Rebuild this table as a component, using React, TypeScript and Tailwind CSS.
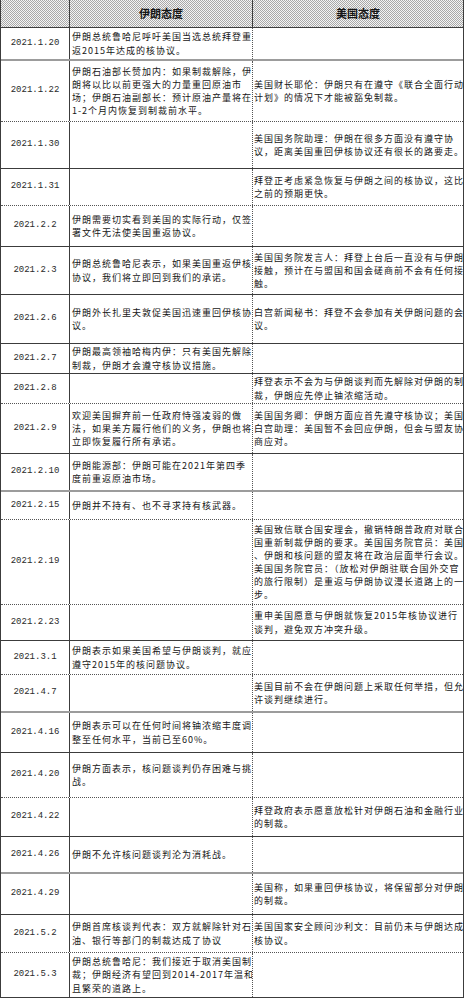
type Row = {
  date: string;
  iran: string[];
  us: string[];
  h: string;
  b: string;
};

// row dividers as they appear in the sheet
const SOLID = "border-b border-[#3c3c3c]";
const DOT = "border-b border-dotted border-[#555555]";
const THICK = "border-b-2 border-[#9c9c9c]";

const rows: Row[] = [
  {
    date: "2021.1.20",
    iran: ["伊朗总统鲁哈尼呼吁美国当选总统拜登重", "返2015年达成的核协议。"],
    us: [],
    h: "h-[33px]",
    b: THICK,
  },
  {
    date: "2021.1.22",
    iran: [
      "伊朗石油部长赞加内：如果制裁解除，伊",
      "朗将以比以前更强大的力量重回原油市",
      "场；伊朗石油副部长：预计原油产量将在",
      "1-2个月内恢复到制裁前水平。",
    ],
    us: ["美国财长耶伦：伊朗只有在遵守《联合全面行动", "计划》的情况下才能被豁免制裁。"],
    h: "h-[61px]",
    b: DOT,
  },
  {
    date: "2021.1.30",
    iran: [],
    us: ["美国国务院助理：伊朗在很多方面没有遵守协", "议，距离美国重回伊核协议还有很长的路要走。"],
    h: "h-[47px]",
    b: SOLID,
  },
  {
    date: "2021.1.31",
    iran: [],
    us: ["拜登正考虑紧急恢复与伊朗之间的核协议，这比", "之前的预期更快。"],
    h: "h-[37px]",
    b: DOT,
  },
  {
    date: "2021.2.2",
    iran: ["伊朗需要切实看到美国的实际行动，仅签", "署文件无法使美国重返协议。"],
    us: [],
    h: "h-[41px]",
    b: SOLID,
  },
  {
    date: "2021.2.3",
    iran: ["伊朗总统鲁哈尼表示，如果美国重返伊核", "协议，我们将立即回到我们的承诺。"],
    us: [
      "美国国务院发言人：拜登上台后一直没有与伊朗",
      "接触，预计在与盟国和国会磋商前不会有任何接",
      "触。",
    ],
    h: "h-[48px]",
    b: SOLID,
  },
  {
    date: "2021.2.6",
    iran: ["伊朗外长扎里夫敦促美国迅速重回伊核协", "议。"],
    us: ["白宫新闻秘书：拜登不会参加有关伊朗问题的会", "议。"],
    h: "h-[49px]",
    b: SOLID,
  },
  {
    date: "2021.2.7",
    iran: ["伊朗最高领袖哈梅内伊：只有美国先解除", "制裁，伊朗才会遵守核协议措施。"],
    us: [],
    h: "h-[30px]",
    b: SOLID,
  },
  {
    date: "2021.2.8",
    iran: [],
    us: ["拜登表示不会为与伊朗谈判而先解除对伊朗的制", "裁，伊朗应先停止铀浓缩活动。"],
    h: "h-[30px]",
    b: DOT,
  },
  {
    date: "2021.2.9",
    iran: [
      "欢迎美国摒弃前一任政府恃强凌弱的做",
      "法，如果美方履行他们的义务，伊朗也将",
      "立即恢复履行所有承诺。",
    ],
    us: [
      "美国国务卿：伊朗方面应首先遵守核协议；美国",
      "白宫助理：美国暂不会回应伊朗，但会与盟友协",
      "商应对。",
    ],
    h: "h-[50px]",
    b: SOLID,
  },
  {
    date: "2021.2.10",
    iran: ["伊朗能源部：伊朗可能在2021年第四季", "度前重返原油市场。"],
    us: [],
    h: "h-[38px]",
    b: THICK,
  },
  {
    date: "2021.2.15",
    iran: ["伊朗并不持有、也不寻求持有核武器。"],
    us: [],
    h: "h-[28px]",
    b: DOT,
  },
  {
    date: "2021.2.19",
    iran: [],
    us: [
      "美国致信联合国安理会，撤销特朗普政府对联合",
      "国重新制裁伊朗的要求。美国国务院官员：美国",
      "、伊朗和核问题的盟友将在政治层面举行会议。",
      "美国国务院官员：（放松对伊朗驻联合国外交官",
      "的旅行限制）是重返与伊朗协议漫长道路上的一",
      "步。",
    ],
    h: "h-[85px]",
    b: DOT,
  },
  {
    date: "2021.2.23",
    iran: [],
    us: ["重申美国愿意与伊朗就恢复2015年核协议进行", "谈判，避免双方冲突升级。"],
    h: "h-[36px]",
    b: SOLID,
  },
  {
    date: "2021.3.1",
    iran: ["伊朗表示如果美国希望与伊朗谈判，就应", "遵守2015年的核问题协议。"],
    us: [],
    h: "h-[34px]",
    b: DOT,
  },
  {
    date: "2021.4.7",
    iran: [],
    us: ["美国目前不会在伊朗问题上采取任何举措，但允", "许谈判继续进行。"],
    h: "h-[38px]",
    b: THICK,
  },
  {
    date: "2021.4.16",
    iran: ["伊朗表示可以在任何时间将铀浓缩丰度调", "整至任何水平，当前已至60%。"],
    us: [],
    h: "h-[40px]",
    b: SOLID,
  },
  {
    date: "2021.4.20",
    iran: ["伊朗方面表示，核问题谈判仍存困难与挑", "战。"],
    us: [],
    h: "h-[45px]",
    b: DOT,
  },
  {
    date: "2021.4.22",
    iran: [],
    us: ["拜登政府表示愿意放松针对伊朗石油和金融行业", "的制裁。"],
    h: "h-[39px]",
    b: SOLID,
  },
  {
    date: "2021.4.26",
    iran: ["伊朗不允许核问题谈判沦为消耗战。"],
    us: [],
    h: "h-[37px]",
    b: THICK,
  },
  {
    date: "2021.4.29",
    iran: [],
    us: ["美国称，如果重回伊核协议，将保留部分对伊朗", "的制裁。"],
    h: "h-[41px]",
    b: SOLID,
  },
  {
    date: "2021.5.2",
    iran: ["伊朗首席核谈判代表：双方就解除针对石", "油、银行等部门的制裁达成了协议"],
    us: ["美国国家安全顾问沙利文：目前仍未与伊朗达成", "核协议。"],
    h: "h-[38px]",
    b: DOT,
  },
  {
    date: "2021.5.3",
    iran: [
      "伊朗总统鲁哈尼：我们接近于取消美国制",
      "裁；伊朗经济有望回到2014-2017年温和",
      "且繁荣的道路上。",
    ],
    us: [],
    h: "h-[45px]",
    b: SOLID,
  },
];

function Lines({ lines, className }: { lines: string[]; className: string }) {
  return (
    <div className={"flex flex-col justify-center overflow-hidden " + className}>
      {lines.map((line, i) => (
        <span key={i} className="whitespace-nowrap">
          {line}
        </span>
      ))}
    </div>
  );
}

export default function App() {
  return (
    <div className="min-h-screen bg-white">
      <div className="w-[464px] border-x border-[#3c3c3c] text-[9px] leading-[13.1px] tracking-[1px] text-[#161616] font-['Noto_Sans_CJK_SC',sans-serif]">
        {/* Header */}
        <div className="grid h-[28px] grid-cols-[69px_183px_1fr] border-b border-[#3c3c3c] bg-[#cdcdcd] bg-[repeating-conic-gradient(#a8a8a8_0%_25%,#f4f4f4_0%_50%)] bg-size-[2px_2px]">
          <div className="border-r border-[#3c3c3c]" />
          <div className="flex items-center justify-center border-r border-[#3c3c3c] text-[11px] font-bold tracking-normal">
            伊朗态度
          </div>
          <div className="flex items-center justify-center text-[11px] font-bold tracking-normal">
            美国态度
          </div>
        </div>

        {/* Rows */}
        {rows.map((row) => (
          <div key={row.date} className={"grid grid-cols-[69px_183px_1fr] " + row.h + " " + row.b}>
            <div className="flex items-center justify-center border-r border-[#3c3c3c] font-['Liberation_Mono',monospace] text-[9px] tracking-normal text-[#2a2a2a]">
              {row.date}
            </div>
            <Lines lines={row.iran} className="border-r border-dotted border-[#555555] pl-[2px]" />
            <Lines lines={row.us} className="pl-[1px]" />
          </div>
        ))}
      </div>
    </div>
  );
}
